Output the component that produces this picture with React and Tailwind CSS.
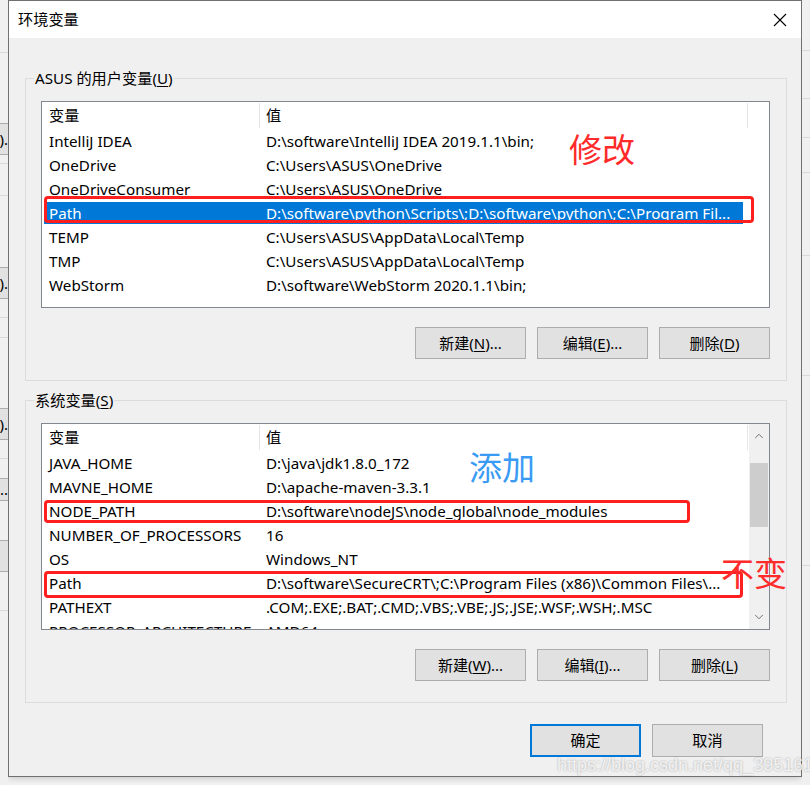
import { ChevronUp, ChevronDown } from 'lucide-react';

const userVars = [
  ['IntelliJ IDEA', 'D:\\software\\IntelliJ IDEA 2019.1.1\\bin;'],
  ['OneDrive', 'C:\\Users\\ASUS\\OneDrive'],
  ['OneDriveConsumer', 'C:\\Users\\ASUS\\OneDrive'],
  ['Path', 'D:\\software\\python\\Scripts\\;D:\\software\\python\\;C:\\Program Fil...'],
  ['TEMP', 'C:\\Users\\ASUS\\AppData\\Local\\Temp'],
  ['TMP', 'C:\\Users\\ASUS\\AppData\\Local\\Temp'],
  ['WebStorm', 'D:\\software\\WebStorm 2020.1.1\\bin;'],
];

const sysVars = [
  ['JAVA_HOME', 'D:\\java\\jdk1.8.0_172'],
  ['MAVNE_HOME', 'D:\\apache-maven-3.3.1'],
  ['NODE_PATH', 'D:\\software\\nodeJS\\node_global\\node_modules'],
  ['NUMBER_OF_PROCESSORS', '16'],
  ['OS', 'Windows_NT'],
  ['Path', 'D:\\software\\SecureCRT\\;C:\\Program Files (x86)\\Common Files\\...'],
  ['PATHEXT', '.COM;.EXE;.BAT;.CMD;.VBS;.VBE;.JS;.JSE;.WSF;.WSH;.MSC'],
  ['PROCESSOR_ARCHITECTURE', 'AMD64'],
];

function Mnemonic({ text, k, tail = '' }) {
  return (
    <span>
      {text}(<span className="underline underline-offset-2">{k}</span>){tail}
    </span>
  );
}

function WinButton({ children, primary }) {
  return (
    <div
      className={`flex w-[111px] items-center justify-center bg-[#e1e1e1] text-[15px] text-black ${
        primary ? 'h-[33px] border-2 border-[#0078d7]' : 'h-[32px] border border-[#adadad]'
      }`}
    >
      {children}
    </div>
  );
}

function VarList({ rows, selected, scroll }) {
  return (
    <div className="flex h-[207px] w-[729px] overflow-hidden border border-[#828790] bg-white">
      <div className="w-[706px] shrink-0">
        <div className="flex h-[27px] items-center">
          <div className="flex h-[25px] w-[218px] items-center border-r border-[#e5e5e5] pl-[7px]">变量</div>
          <div className="flex h-[25px] w-[488px] items-center border-r border-[#e5e5e5] pl-[6px]">值</div>
        </div>
        {rows.map(([name, value], i) => (
          <div key={name + i} className="flex h-[24px] items-center">
            <div
              className={`ml-[2px] flex h-[22px] w-[699px] items-center ${
                i === selected ? 'bg-[#0078d7] text-white' : ''
              }`}
            >
              <div className="w-[216px] shrink-0 truncate pl-[5px]">{name}</div>
              <div className="w-[482px] shrink-0 overflow-hidden whitespace-nowrap pl-[6px]">{value}</div>
            </div>
          </div>
        ))}
      </div>
      {scroll ? (
        <div className="ml-[1px] flex w-[20px] flex-col items-center bg-[#f0f0f0]">
          <div className="flex h-[24px] items-center justify-center">
            <ChevronUp size={14} strokeWidth={1.5} className="text-[#606060]" />
          </div>
          <div className="mt-[15px] h-[64px] w-[18px] bg-[#cdcdcd]" />
          <div className="flex-1" />
          <div className="flex h-[24px] items-center justify-center">
            <ChevronDown size={14} strokeWidth={1.5} className="text-[#606060]" />
          </div>
        </div>
      ) : (
        <div className="flex-1" />
      )}
    </div>
  );
}

function Group({ label, rows, selected, scroll, buttons, className = '' }) {
  return (
    <div className={`relative ml-[16px] h-[303px] w-[762px] border border-[#dcdcdc] px-[15px] pt-[22px] ${className}`}>
      <span className="absolute left-[8px] top-[-11px] bg-[#f0f0f0] px-[1px] leading-[20px]">{label}</span>
      <VarList rows={rows} selected={selected} scroll={scroll} />
      <div className="mt-[19px] flex w-[729px] justify-end gap-[11px]">
        {buttons.map((b, i) => (
          <WinButton key={i}>{b}</WinButton>
        ))}
      </div>
    </div>
  );
}

function Strip({ lines, blocks, side }) {
  return (
    <div className={`relative h-full overflow-hidden bg-[#f0f0f0] ${side === 'left' ? 'w-[8px]' : 'flex-1'}`}>
      {lines.map((y) => (
        <div key={'l' + y} className="absolute left-0 h-[1px] w-full bg-[#d9d9d9]" style={{ top: y }} />
      ))}
      {blocks.map(([y, h, t]) => (
        <div
          key={'b' + y}
          className="absolute left-0 flex w-full items-center justify-end border-y border-[#adadad] bg-[#e1e1e1] text-[15px] leading-none"
          style={{ top: y, height: h }}
        >
          {t}
        </div>
      ))}
    </div>
  );
}

export default function App() {
  return (
    <div className="relative flex h-[785px] w-[810px] overflow-hidden bg-[#f3f3f3] font-['Noto_Sans','Noto_Sans_CJK_SC',sans-serif] text-[15.2px] text-black">
      <Strip
        side="left"
        lines={[52, 163, 195, 317, 337, 458, 610]}
        blocks={[
          [123, 32, ').'],
          [267, 32, ').'],
          [408, 32, ').'],
          [478, 23, '..'],
          [540, 32, ''],
        ]}
      />

      <div className="flex h-[777px] w-[794px] shrink-0 flex-col border border-[#707070] bg-[#f0f0f0] shadow-[0_0_8px_rgba(0,0,0,0.25)]">
        <div className="flex h-[37px] items-center justify-between bg-white pl-[9px] pr-[14px]">
          <span>环境变量</span>
          <svg width="14" height="14" viewBox="0 0 14 14" className="text-black">
            <path d="M1 1L13 13M13 1L1 13" stroke="currentColor" strokeWidth="1.1" />
          </svg>
        </div>

        <Group
          className="mt-[40px]"
          label={<Mnemonic text="ASUS 的用户变量" k="U" />}
          rows={userVars}
          selected={3}
          buttons={[
            <Mnemonic text="新建" k="N" tail="..." />,
            <Mnemonic text="编辑" k="E" tail="..." />,
            <Mnemonic text="删除" k="D" />,
          ]}
        />

        <Group
          className="mt-[19px]"
          label={<Mnemonic text="系统变量" k="S" />}
          rows={sysVars}
          selected={-1}
          scroll
          buttons={[
            <Mnemonic text="新建" k="W" tail="..." />,
            <Mnemonic text="编辑" k="I" tail="..." />,
            <Mnemonic text="删除" k="L" />,
          ]}
        />

        <div className="mt-[21px] flex justify-end gap-[11px] pr-[38px]">
          <WinButton primary>确定</WinButton>
          <div className="flex h-[33px] w-[111px] items-center justify-center border border-[#adadad] bg-[#e1e1e1]">取消</div>
        </div>
      </div>

      <Strip
        side="right"
        lines={[50, 98, 137, 172, 255, 375, 565]}
        blocks={[]}
      />

      {/* annotations drawn over the screenshot */}
      <div className="pointer-events-none absolute left-[44px] top-[196px] h-[27px] w-[710px] rounded-[4px] border-[3px] border-[#ff1f1f]" />
      <div className="pointer-events-none absolute left-[44px] top-[500px] h-[23px] w-[646px] rounded-[4px] border-[3px] border-[#ff1f1f]" />
      <div className="pointer-events-none absolute left-[44px] top-[571px] h-[27px] w-[699px] rounded-[4px] border-[3px] border-[#ff1f1f]" />

      <span className="absolute left-[569px] top-[128px] text-[33px] leading-[44px] text-[#ff2a2a]">修改</span>
      <span className="absolute left-[469px] top-[446px] text-[33px] leading-[44px] text-[#3a9bf5]">添加</span>
      <span className="absolute left-[721px] top-[552px] text-[33px] leading-[44px] text-[#ff2a2a]">不变</span>

      <span className="absolute left-[557px] top-[754px] whitespace-nowrap font-['Liberation_Sans',sans-serif] text-[18px] leading-[22px] text-white/80 [text-shadow:0_0_2px_rgba(0,0,0,0.35)]">
        https://blog.csdn.net/qq_39516159
      </span>
    </div>
  );
}
